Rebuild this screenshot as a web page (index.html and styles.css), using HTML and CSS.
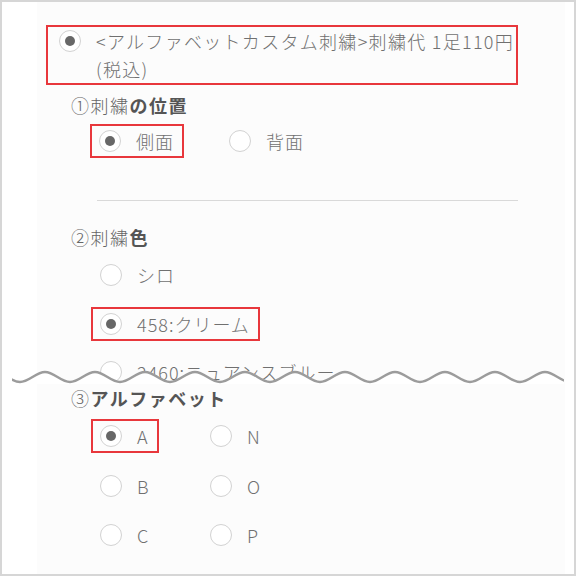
FILE: index.html
```html
<!DOCTYPE html>
<html lang="ja">
<head>
    <meta charset="UTF-8">
    <meta name="viewport" content="width=device-width, initial-scale=1.0">
    <title>刺繍オプション</title>
    <link rel="stylesheet" href="styles.css">
</head>
<body>
    <div class="frame">
        <div class="panel">
            <div class="upper">
                <div class="opt opt-main marked">
                    <span class="radio on"></span>
                    <span class="opt-text"><span class="nowrap">&lt;アルファベットカスタム刺繍&gt;刺繍代 1足110円</span><br>(税込)</span>
                </div>

                <h2 class="q q-first"><span class="thin">①刺繍</span>の位置</h2>
                <div class="choices">
                    <div class="opt marked"><span class="radio on"></span><span class="opt-text">側面</span></div>
                    <div class="opt"><span class="radio"></span><span class="opt-text">背面</span></div>
                </div>

                <hr class="divider">

                <h2 class="q"><span class="thin">②刺繍</span>色</h2>
                <div class="color-list">
                    <div class="opt"><span class="radio"></span><span class="opt-text">シロ</span></div>
                    <div class="opt marked"><span class="radio on"></span><span class="opt-text">458:クリーム</span></div>
                    <div class="opt"><span class="radio"></span><span class="opt-text">2460:ニュアンスブルー</span></div>
                </div>
            </div>

            <div class="lower">
                <h2 class="q"><span class="thin">③</span>アルファベット</h2>
                <div class="alpha">
                    <div class="opt marked"><span class="radio on"></span><span class="opt-text">A</span></div>
                    <div class="opt"><span class="radio"></span><span class="opt-text">N</span></div>
                    <div class="opt"><span class="radio"></span><span class="opt-text">B</span></div>
                    <div class="opt"><span class="radio"></span><span class="opt-text">O</span></div>
                    <div class="opt"><span class="radio"></span><span class="opt-text">C</span></div>
                    <div class="opt"><span class="radio"></span><span class="opt-text">P</span></div>
                </div>
            </div>
        </div>

        <!-- 省略を示す波線 -->
        <svg class="wave" width="552" height="18" viewBox="0 0 552 18">
            <path class="wave-fill" d="M-42,16 C-32.9,16 -26.1,6 -17,6 C-7.9,6 -1.1,16 8,16 S23.9,6 33,6 S48.9,16 58,16 S73.9,6 83,6 S98.9,16 108,16 S123.9,6 133,6 S148.9,16 158,16 S173.9,6 183,6 S198.9,16 208,16 S223.9,6 233,6 S248.9,16 258,16 S273.9,6 283,6 S298.9,16 308,16 S323.9,6 333,6 S348.9,16 358,16 S373.9,6 383,6 S398.9,16 408,16 S423.9,6 433,6 S448.9,16 458,16 S473.9,6 483,6 S498.9,16 508,16 S523.9,6 533,6 S548.9,16 558,16 S573.9,6 583,6 L583,18 L-42,18 Z"/>
            <path class="wave-line" d="M-42,16 C-32.9,16 -26.1,6 -17,6 C-7.9,6 -1.1,16 8,16 S23.9,6 33,6 S48.9,16 58,16 S73.9,6 83,6 S98.9,16 108,16 S123.9,6 133,6 S148.9,16 158,16 S173.9,6 183,6 S198.9,16 208,16 S223.9,6 233,6 S248.9,16 258,16 S273.9,6 283,6 S298.9,16 308,16 S323.9,6 333,6 S348.9,16 358,16 S373.9,6 383,6 S398.9,16 408,16 S423.9,6 433,6 S448.9,16 458,16 S473.9,6 483,6 S498.9,16 508,16 S523.9,6 533,6 S548.9,16 558,16 S573.9,6 583,6"/>
        </svg>
    </div>
</body>
</html>
```

FILE: styles.css
```css
body {
    margin: 0;
    font-family: "Noto Sans CJK JP", "Noto Sans", sans-serif;
    font-weight: 300;
    color: #707070;
    background: #fff;
}
.frame {
    position: relative;
    width: 576px;
    height: 576px;
    box-sizing: border-box;
    border: 2px solid #d6d6d6;
    background: #fff;
}
.panel {
    margin: 0 9px 0 35px;
    height: 100%;
    background: #fcfcfc;
}
.upper {
    height: 382px;
    overflow: hidden;
    padding-top: 23px;
    box-sizing: border-box;
}
.nowrap {
    white-space: nowrap;
}

/* 選択肢 */
.opt {
    display: flex;
    align-items: flex-start;
    gap: 15px;
    width: max-content;
    padding: 1px 8px 1px 7px;
    border: 2px solid transparent;
    font-size: 18px;
    line-height: 28px;
    letter-spacing: 1px;
}
.opt.marked {
    border-color: #e8373c;
}
.opt-main {
    margin-left: 9px;
    width: 472px;
    box-sizing: border-box;
    padding: 0 0 0 11px;
    letter-spacing: 1.3px;
}
.radio {
    flex: none;
    position: relative;
    width: 22px;
    height: 22px;
    margin-top: 3px;
    box-sizing: border-box;
    border: 1px solid #d2d2d2;
    border-radius: 50%;
    background: #fff;
}
.radio.on::after {
    content: "";
    position: absolute;
    left: 5px;
    top: 5px;
    width: 10px;
    height: 10px;
    border-radius: 50%;
    background: #676767;
}

/* 見出し */
.q {
    margin: 0;
    padding-left: 34px;
    font-size: 18px;
    line-height: 28px;
    letter-spacing: 1.5px;
    font-weight: bold;
    color: #555;
}
.q-first {
    margin-top: 6px;
}
.divider + .q {
    margin-top: 22px;
}
.q .thin {
    font-weight: 300;
    color: #666;
}

.choices {
    display: flex;
    gap: 36px;
    margin: 5px 0 0 53px;
}
.divider {
    margin: 42px 0 0 60px;
    width: 421px;
    height: 1px;
    border: 0;
    background: #d9d9d9;
}
.q + .color-list,
.q + .alpha {
    margin-top: 7px;
}
.color-list {
    display: flex;
    flex-direction: column;
    gap: 14.5px;
    margin-left: 54px;
}
.alpha {
    display: grid;
    grid-template-columns: 110px 110px;
    row-gap: 15.5px;
    justify-items: start;
    margin-left: 54px;
}

/* 波線 */
.wave {
    position: absolute;
    left: 10px;
    top: 364px;
}
.wave-fill {
    fill: #fff;
}
.wave-line {
    fill: none;
    stroke: #9c9c9c;
    stroke-width: 2.4;
    stroke-linecap: round;
}
```
